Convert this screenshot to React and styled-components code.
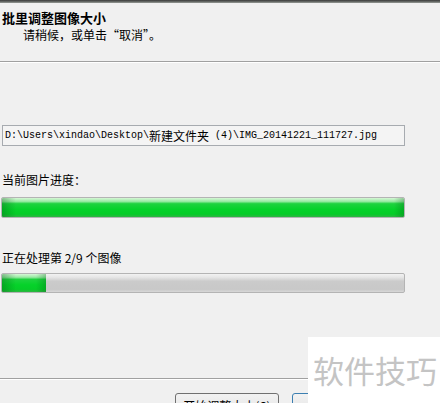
import React from "react";
import styled, { createGlobalStyle } from "styled-components";

const GlobalStyle = createGlobalStyle`
  html, body {
    margin: 0;
    padding: 0;
    background: #f0f0f0;
  }
  body {
    font-family: "Noto Sans CJK SC", "Liberation Sans", sans-serif;
    color: #000;
  }
`;

const Window = styled.div`
  position: relative;
  width: 440px;
  height: 403px;
  overflow: hidden;
  display: flex;
  flex-direction: column;
  background: #f0f0f0;

  & > * {
    flex-shrink: 0;
  }
`;

const TopBar = styled.div`
  height: 3px;
  background: linear-gradient(to bottom, #3a3a3a, #6a6e6a 60%, #9a9e9a);
`;

const Header = styled.div`
  height: 58px;
  box-sizing: border-box;
  padding: 7px 0 0 2px;
  display: flex;
  flex-direction: column;
  gap: 2px;
`;

const Title = styled.div`
  font-size: 13px;
  line-height: 16px;
  font-weight: 700;
`;

const Subtitle = styled.div`
  font-size: 12px;
  line-height: 14px;
  padding-left: 21px;
`;

const Separator = styled.div`
  flex-shrink: 0;
  height: 0;
  width: 100%;
  border-top: 1px solid #a0a0a0;
  border-bottom: 1px solid #ffffff;
  margin-top: ${({ $top }) => $top || 0}px;
`;

const Content = styled.div`
  width: 404px;
  padding-left: 1px;
  display: flex;
  flex-direction: column;

  & > * {
    flex-shrink: 0;
  }
`;

const PathBox = styled.div`
  margin-top: 62px;
  margin-left: 1px;
  height: 21px;
  box-sizing: border-box;
  border: 1px solid #a7abb0;
  background: #f4f4f4;
  padding: 0 0 0 2px;
  display: flex;
  align-items: center;
  font-family: "Liberation Mono", "Noto Sans CJK SC", monospace;
  font-size: 10px;
  white-space: pre;
`;

const Cjk = styled.span`
  font-family: "Noto Sans CJK SC", sans-serif;
  font-size: 12px;
`;

const Label = styled.div`
  margin-top: ${({ $top }) => $top}px;
  margin-left: 1px;
  font-size: 12px;
  line-height: 14px;
  white-space: pre;
`;

const Track = styled.div`
  margin-top: ${({ $top }) => $top}px;
  height: ${({ $height }) => $height}px;
  box-sizing: border-box;
  border: 1px solid #b4b4b4;
  border-radius: 2px;
  background: linear-gradient(
    to bottom,
    #f2f2f2 0%,
    #e4e4e4 20%,
    #cbcbcb 40%,
    #c8c8c8 85%,
    #d8d8d8 100%
  );
  display: flex;
  overflow: hidden;
`;

const Fill = styled.div`
  height: 100%;
  background:
    linear-gradient(
      to right,
      rgba(0, 90, 20, 0.35) 0px,
      rgba(0, 90, 20, 0) 14px,
      rgba(0, 90, 20, 0) calc(100% - 10px),
      rgba(0, 90, 20, 0.3) 100%
    ),
    linear-gradient(
      to bottom,
      #d6f7d6 0%,
      #9aeaa4 18%,
      #1fd23f 30%,
      #06d22a 60%,
      #06cc28 85%,
      #2fb444 100%
    );
`;

const Footer = styled.div`
  display: flex;
  flex-direction: column;
`;

const Buttons = styled.div`
  margin-top: 13px;
  padding-left: 175px;
  display: flex;
  gap: 13px;
`;

const Button = styled.button`
  height: 23px;
  width: ${({ $width }) => $width}px;
  box-sizing: border-box;
  border: 1px solid ${({ $primary }) => ($primary ? "#3c7fb1" : "#707070")};
  border-radius: 3px;
  background: linear-gradient(to bottom, #f2f2f2 0%, #ebebeb 48%, #dddddd 52%, #cfcfcf 100%);
  font-family: "Noto Sans CJK SC", sans-serif;
  font-size: 12px;
  line-height: 14px;
  padding: 2px 0 0 0;
  color: #000;
  text-align: center;
`;

const Watermark = styled.div`
  position: absolute;
  left: 308px;
  top: 337px;
  width: 132px;
  height: 66px;
  background: #ffffff;
  color: #c4c4c4;
  font-family: "Noto Sans CJK SC", sans-serif;
  font-size: 31px;
  line-height: 66px;
  padding-left: 5px;
  box-sizing: border-box;
  white-space: nowrap;
`;

const ProgressBar = ({ top, height, value }) => (
  <Track $top={top} $height={height}>
    <Fill style={{ width: `${value}%` }} />
  </Track>
);

export default function App() {
  return (
    <Window>
      <GlobalStyle />
      <TopBar />
      <Header>
        <Title>批里调整图像大小</Title>
        <Subtitle>请稍候，或单击“取消”。</Subtitle>
      </Header>
      <Separator />
      <Content>
        <PathBox>
          {"D:\\Users\\xindao\\Desktop\\"}
          <Cjk>新建文件夹</Cjk>
          {" (4)\\IMG_20141221_111727.jpg"}
        </PathBox>
        <Label $top={27}>当前图片进度：</Label>
        <ProgressBar top={10} height={21} value={100} />
        <Label $top={33}>{"正在处理第 2/9 个图像"}</Label>
        <ProgressBar top={8} height={20} value={11} />
      </Content>
      <Footer>
        <Separator $top={85} />
        <Buttons>
          <Button $width={104}>开始调整大小(S)</Button>
          <Button $width={80} $primary>
            取消
          </Button>
        </Buttons>
      </Footer>
      <Watermark>软件技巧</Watermark>
    </Window>
  );
}
